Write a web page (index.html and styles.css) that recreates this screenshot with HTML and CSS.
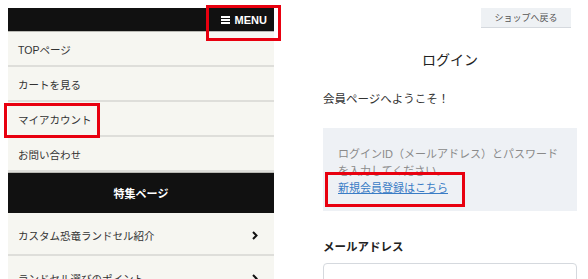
FILE: index.html
```html
<!DOCTYPE html>
<html lang="ja">
<head>
    <meta charset="UTF-8">
    <meta name="viewport" content="width=device-width, initial-scale=1.0">
    <title>ログイン</title>
    <link rel="stylesheet" href="styles.css">
</head>
<body>
<div class="shot">
    <div class="phone">
        <div class="phone-header">
            <span class="menu-btn">
                <svg class="burger" width="9" height="8" viewBox="0 0 9 8"><rect x="0" y="0" width="9" height="2"/><rect x="0" y="3" width="9" height="2"/><rect x="0" y="6" width="9" height="2"/></svg>
                MENU
            </span>
        </div>
        <ul class="menu">
            <li class="menu-item">TOPページ</li>
            <li class="menu-item">カートを見る</li>
            <li class="menu-item">マイアカウント</li>
            <li class="menu-item">お問い合わせ</li>
        </ul>
        <div class="section-bar">特集ページ</div>
        <ul class="menu">
            <li class="menu-item feature">
                カスタム恐竜ランドセル紹介
                <svg class="chevron" width="6" height="9" viewBox="0 0 6 9"><polyline points="1,1 4.5,4.5 1,8" fill="none" stroke="#111" stroke-width="2"/></svg>
            </li>
            <li class="menu-item feature">
                ランドセル選びのポイント
                <svg class="chevron" width="6" height="9" viewBox="0 0 6 9"><polyline points="1,1 4.5,4.5 1,8" fill="none" stroke="#111" stroke-width="2"/></svg>
            </li>
        </ul>
    </div>

    <div class="login">
        <div class="back-row">
            <button type="button" class="back-btn">ショップへ戻る</button>
        </div>
        <h1>ログイン</h1>
        <p class="welcome">会員ページへようこそ！</p>
        <div class="notice">
            ログインID（メールアドレス）とパスワード<br>
            を入力してください。<br>
            <a href="#">新規会員登録はこちら</a>
        </div>
        <label class="field-label" for="email">メールアドレス</label>
        <input type="text" id="email" class="field">
    </div>
</div>

<div class="mark mark-menu"></div>
<div class="mark mark-account"></div>
<div class="mark mark-signup"></div>
</body>
</html>
```

FILE: styles.css
```css
body {
    margin: 0;
    background-color: white;
    font-family: "Liberation Sans", "Noto Sans CJK JP", sans-serif;
    color: #333;
    overflow: hidden;
}

.shot {
    display: flex;
    height: 279px;
    overflow: hidden;
}

/* left: phone menu */
.phone {
    width: 266px;
    margin: 8px 0 0 8px;
    background-color: #f6f6f1;
}

.phone-header {
    height: 23px;
    background-color: #111;
    border-bottom: 1px solid #b9b9b4;
    display: flex;
    justify-content: flex-end;
    align-items: center;
    padding-right: 7px;
}

.menu-btn {
    display: flex;
    align-items: center;
    gap: 5px;
    color: white;
    font-size: 11px;
    font-weight: bold;
}

.burger {
    fill: white;
}

.menu {
    list-style: none;
    margin: 0;
    padding: 0;
}

.menu-item {
    height: 31px;
    border-bottom: 2px solid #dededa;
    display: flex;
    align-items: center;
    padding: 2px 10px 0;
    font-size: 10.5px;
    color: #333;
}

.menu-item.feature {
    height: 38px;
    padding-top: 3px;
    justify-content: space-between;
    padding-right: 16px;
}

.section-bar {
    height: 40px;
    background-color: #111;
    border-top: 1px solid #b9b9b4;
    color: white;
    font-size: 11px;
    font-weight: bold;
    display: flex;
    align-items: center;
    justify-content: center;
}

/* right: login page */
.login {
    flex: 1;
    padding: 8px 11px 0 49px;
}

.back-row {
    display: flex;
    justify-content: flex-end;
    padding-right: 6px;
}

.back-btn {
    width: 90px;
    height: 20px;
    border: none;
    border-bottom: 1px solid #d5d9de;
    background-color: #eef1f4;
    color: #555;
    font-family: inherit;
    font-size: 9px;
    padding: 0;
}

h1 {
    margin: 22px 0 0;
    font-size: 14px;
    line-height: 20px;
    font-weight: normal;
    text-align: center;
    color: #222;
}

.welcome {
    margin: 21px 0 0;
    font-size: 11.5px;
    line-height: 17px;
}

.notice {
    margin-top: 20px;
    background-color: #eef1f5;
    padding: 18px 15px 14px;
    font-size: 11px;
    line-height: 17px;
    color: #8a8a8a;
}

.notice a {
    color: #3a7cc5;
}

.field-label {
    display: block;
    margin-top: 28px;
    font-size: 11.5px;
    line-height: 17px;
    font-weight: bold;
    color: #222;
}

.field {
    display: block;
    width: 100%;
    height: 34px;
    margin-top: 7px;
    border: 1px solid #d5d9de;
    border-radius: 4px;
    box-sizing: border-box;
}

/* red annotation frames */
.mark {
    position: absolute;
    border: 3px solid #e8000f;
    box-sizing: border-box;
}

.mark-menu {
    left: 206px;
    top: 5px;
    width: 75px;
    height: 36px;
}

.mark-account {
    left: 4px;
    top: 103px;
    width: 96px;
    height: 35px;
}

.mark-signup {
    left: 325px;
    top: 172px;
    width: 140px;
    height: 35px;
}
```
